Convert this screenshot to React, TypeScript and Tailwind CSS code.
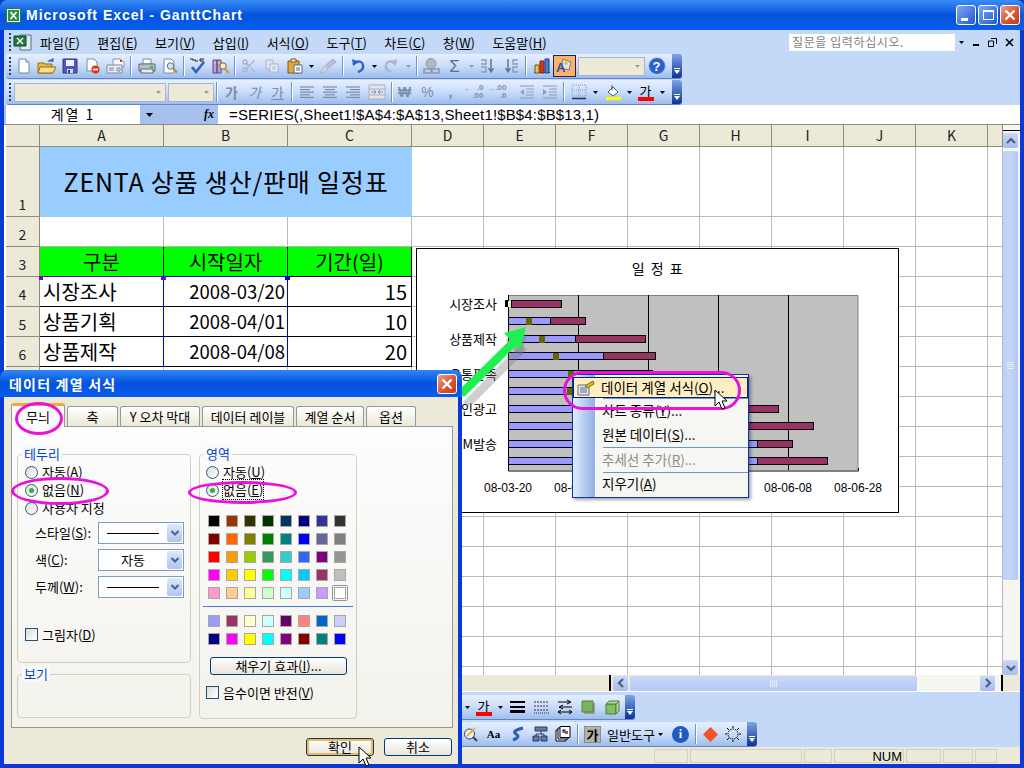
import type { ReactNode } from 'react'
import { Scissors } from 'lucide-react'

const font = "font-['Noto_Sans_CJK_KR','Liberation_Sans',sans-serif]"

function Ico({ children, w = 16, vb = '0 0 16 16' }: { children: ReactNode; w?: number; vb?: string }) {
  return (
    <svg width={w} height={16} viewBox={vb} className="block">
      {children}
    </svg>
  )
}

function Btn({ children, w = 'w-[23px]', on }: { children: ReactNode; w?: string; on?: boolean }) {
  return (
    <div className={`${w} h-[22px] flex items-center justify-center shrink-0 ${on ? 'bg-[#ffb266] border border-[#0a246a]' : ''}`}>
      {children}
    </div>
  )
}

function Sep({ w }: { w: string }) {
  return (
    <div className={`${w} h-[20px] flex justify-center shrink-0`}>
      <div className="w-px h-full bg-[#6f93cf] border-r border-white box-content" />
    </div>
  )
}

function Drop({ w = 'w-[10px]', gray }: { w?: string; gray?: boolean }) {
  return (
    <div className={`${w} h-[22px] flex items-center justify-center shrink-0`}>
      <svg width="5" height="3" viewBox="0 0 5 3">
        <path d="M0 0h5L2.5 3z" fill={gray ? '#8d9bb5' : '#000'} />
      </svg>
    </div>
  )
}

function Grip() {
  return (
    <div className="w-[2px] h-full ml-[3px] mr-[1px] flex flex-col justify-center gap-[2px] shrink-0">
      {[0, 1, 2, 3, 4].map((i) => (
        <div key={i} className="w-[2px] h-[2px] bg-[#27416f]" />
      ))}
    </div>
  )
}

function Chevron() {
  return (
    <div className="absolute right-0 top-0 bottom-0 w-[10px] rounded-r-[3px] bg-gradient-to-b from-[#7ea3e6] to-[#0f3295] flex flex-col items-center justify-end pb-[4px]">
      <div className="w-[6px] h-px bg-white mb-[1px]" />
      <svg width="6" height="4" viewBox="0 0 6 4">
        <path d="M0 0h6L3 4z" fill="#fff" />
      </svg>
    </div>
  )
}

function Combo({ w }: { w: string }) {
  return (
    <div className={`${w} h-[19px] bg-[#ece9d8] border border-[#a8b6ce] flex items-center justify-end pr-[4px] shrink-0`}>
      <svg width="5" height="3" viewBox="0 0 5 3">
        <path d="M0 0h5L2.5 3z" fill="#9a9a90" />
      </svg>
    </div>
  )
}

const NewIcon = () => (
  <Ico>
    <path d="M3 1h7l3 3v11H3z" fill="#fff" stroke="#7a8aa0" />
    <path d="M10 1v3h3" fill="#dfe7f4" stroke="#7a8aa0" />
  </Ico>
)
const OpenIcon = () => (
  <Ico w={20} vb="0 0 20 16">
    <path d="M1 5h6l1 1h7v9H1z" fill="#e8b64a" stroke="#9b6a14" />
    <path d="M3 9h16l-3 6H1z" fill="#f8dd84" stroke="#9b6a14" />
    <path d="M11 4q2-3 5-2M16 0v3h-3" fill="none" stroke="#3e6cc8" strokeWidth="1.3" />
  </Ico>
)
const SaveIcon = () => (
  <Ico>
    <path d="M1 1h14v14H1z" fill="#5158bb" stroke="#33387a" />
    <path d="M4 2h8v6H4z" fill="#eef1fb" />
    <path d="M5 11h6v4H5z" fill="#d7dbe8" />
    <path d="M6 12h2v3H6z" fill="#33387a" />
  </Ico>
)
const PermIcon = () => (
  <Ico>
    <path d="M2 1h7l3 3v9H2z" fill="#fff" stroke="#7a8aa0" />
    <circle cx="10.5" cy="11.5" r="4" fill="#d8391d" />
    <path d="M8 11.5h5" stroke="#fff" strokeWidth="1.6" />
  </Ico>
)
const MailIcon = () => (
  <Ico w={20} vb="0 0 20 16">
    <path d="M7 1h7l4 3v5H7z" fill="#f4f6fb" stroke="#8a94a6" />
    <path d="M1 7h15v8H1z" fill="#e9edf4" stroke="#7c879b" />
    <path d="M3 10h5M3 12h5M11 10h3v3h-3z" stroke="#7c879b" fill="none" />
    <path d="M14 2h2v2h-2z" fill="#d8391d" />
  </Ico>
)
const PrintIcon = () => (
  <Ico w={18} vb="0 0 18 16">
    <path d="M5 1h8v5H5z" fill="#fff" stroke="#7c879b" />
    <path d="M1 6h16v7H1z" fill="#b8c0cc" stroke="#5e6878" />
    <path d="M3 11h12v4H3z" fill="#e8ebf0" stroke="#5e6878" />
    <path d="M12 8h3v2h-3z" fill="#27c13a" />
  </Ico>
)
const PreviewIcon = () => (
  <Ico>
    <path d="M2 1h7l3 3v11H2z" fill="#fff" stroke="#7a8aa0" />
    <circle cx="8.5" cy="8" r="3.2" fill="#cfe3fa" stroke="#62718a" />
    <path d="M11 10.5l4 4" stroke="#c88a1e" strokeWidth="2" />
  </Ico>
)
const SpellIcon = () => (
  <Ico>
    <path d="M0 1h3v2M5 1v2h3M10 1h4M10 1v2h4" stroke="#222" fill="none" />
    <path d="M2 9l4 5L14 4" fill="none" stroke="#2f62c9" strokeWidth="2.6" />
  </Ico>
)
const ResearchIcon = () => (
  <Ico w={18} vb="0 0 18 16">
    <path d="M1 2h4v13H1zM5 2h4v13H5z" fill="#b9a2d6" stroke="#5f4b88" />
    <path d="M2 5h2M6 5h2" stroke="#f5d76e" />
    <circle cx="11" cy="8" r="3.2" fill="#f4eec0" stroke="#7a6a2e" />
    <path d="M13 11l4 4" stroke="#c8a01e" strokeWidth="2" />
  </Ico>
)
const CopyIcon = () => (
  <Ico>
    <path d="M2 2h7v9H2z" fill="#dde4ee" stroke="#aab6c9" />
    <path d="M6 6h8v8H6z" fill="#e9eef5" stroke="#aab6c9" />
    <path d="M8 9h4M8 11h4" stroke="#aab6c9" />
  </Ico>
)
const PasteIcon = () => (
  <Ico>
    <path d="M1 3h11v12H1z" fill="#e0a93a" stroke="#7a5b18" />
    <path d="M4 1h5v3H4z" fill="#f6eecb" stroke="#7a5b18" />
    <path d="M7 7h8v8H7z" fill="#fff" stroke="#5b6a85" />
    <path d="M9 10h4M9 12h4" stroke="#5b6a85" />
  </Ico>
)
const BrushIcon = () => (
  <Ico w={18} vb="0 0 18 16">
    <path d="M1 15l5-7 3 3-5 4z" fill="#d2d9e4" stroke="#a5b0c2" />
    <path d="M7 7l7-6 3 3-7 6z" fill="#b6c0cf" stroke="#a5b0c2" />
  </Ico>
)
const UndoIcon = ({ gray }: { gray?: boolean }) => (
  <Ico>
    <path d="M5 4q7-2 8 3t-5 7" fill="none" stroke={gray ? '#a9b7cf' : '#2f62c9'} strokeWidth="2.4" />
    <path d="M2 1l1 7 6-4z" fill={gray ? '#a9b7cf' : '#2f62c9'} />
  </Ico>
)
const LinkIcon = () => (
  <Ico w={18} vb="0 0 18 16">
    <circle cx="8" cy="5.5" r="5" fill="#aeb8c6" stroke="#8e99aa" />
    <path d="M1 11h7v4H1zM9 11h7v4H9z" fill="none" stroke="#8e99aa" strokeWidth="1.6" />
  </Ico>
)
const SortIcon = () => (
  <Ico>
    <path d="M1 2h5v4H1M1 9h5v5H1" fill="none" stroke="#8e9cb4" strokeWidth="1.4" />
    <path d="M11 1v12M8.5 10l2.5 4 2.5-4" fill="none" stroke="#5d6e8c" strokeWidth="1.4" />
  </Ico>
)
const ChartIcon = () => (
  <Ico w={18} vb="0 0 18 16">
    <path d="M1 14.5h16" stroke="#2b3a55" />
    <path d="M2 7h4v8H2z" fill="#f0c33c" stroke="#6d5a18" />
    <path d="M7 3h4v12H7z" fill="#d8391d" stroke="#7a2010" />
    <path d="M12 1h4v14h-4z" fill="#4a7fd8" stroke="#1f3f80" />
  </Ico>
)
const WizardIcon = () => (
  <Ico w={18} vb="0 0 18 16">
    <path d="M7 1l8 3-2 8-8-2z" fill="#dfe3ea" stroke="#6f7a8c" />
    <path d="M9 3l3 1-1 3-3-1z" fill="#e8c12b" />
    <text x="0" y="14" fontSize="13" fontWeight="700" fill="#2a4fa8" fontFamily="Liberation Sans">A</text>
  </Ico>
)
const HelpIcon = () => (
  <div className="w-[18px] h-[18px] rounded-full bg-[#2a62d0] border border-[#c2d4f0] flex items-center justify-center text-white text-[13px] font-bold leading-none font-['Liberation_Sans',sans-serif]">
    ?
  </div>
)
const Lines = ({ kind }: { kind: 'l' | 'c' | 'r' }) => {
  const rows = [0, 1, 2, 3, 4]
  return (
    <Ico>
      {rows.map((i) => {
        const len = i % 2 ? 10 : 14
        const x = kind === 'l' ? 1 : kind === 'c' ? (16 - len) / 2 : 15 - len
        return <path key={i} d={`M${x} ${3 + i * 2.6}h${len}`} stroke="#7d8da8" strokeWidth="1.2" />
      })}
    </Ico>
  )
}
const MergeIcon = () => (
  <Ico w={18} vb="0 0 18 16">
    <path d="M1 1h16v14H1z" fill="#e2e6ec" stroke="#a6b2c6" />
    <path d="M1 5h16M1 11h16" stroke="#a6b2c6" />
    <path d="M3 8h5M8 8l-2-2M8 8l-2 2M15 8h-5M10 8l2-2M10 8l2 2" stroke="#7d8da8" fill="none" />
  </Ico>
)
const DecIcon = ({ flip }: { flip?: boolean }) => (
  <div className="relative w-[20px] h-[16px] text-[8px] leading-[8px] text-[#7d8da8] font-['Liberation_Sans',sans-serif] font-bold text-right">
    <div>{flip ? '.00' : '.0'}</div>
    <div>{flip ? '.0' : '.00'}</div>
    <div className="absolute left-0 top-[1px]">{flip ? '→' : '←'}</div>
  </div>
)
const IndentIcon = ({ flip }: { flip?: boolean }) => (
  <Ico>
    <path d="M1 2h14M7 5h8M7 8h8M7 11h8M1 14h14" stroke="#8e9cb4" />
    <path d={flip ? 'M1 5l4 3-4 3z' : 'M5 5L1 8l4 3z'} fill="#8e9cb4" />
  </Ico>
)
const BorderIcon = () => (
  <Ico>
    <path d="M1 1h14v11H1z" fill="none" stroke="#8e9cb4" strokeDasharray="1 1" />
    <path d="M8 1v11M1 6h14" stroke="#8e9cb4" strokeDasharray="1 1" />
    <path d="M1 14.5h14" stroke="#26365a" strokeWidth="1.6" />
  </Ico>
)
const FillIcon = () => (
  <Ico>
    <path d="M3 8l5-5 5 5-5 4z" fill="#fff" stroke="#4d5a73" />
    <path d="M7 1v5" stroke="#4d5a73" />
    <path d="M1 13h15v3H1z" fill="#ffff00" />
  </Ico>
)
const FontColor = () => (
  <div className="w-[16px] flex flex-col items-center">
    <span className="text-[13px] leading-[14px]">가</span>
    <div className="w-[16px] h-[4px] bg-[#ff0000] -mt-[1px]" />
  </div>
)

function MenuBar() {
  const items: [string, string][] = [
    ['파일', 'F'],
    ['편집', 'E'],
    ['보기', 'V'],
    ['삽입', 'I'],
    ['서식', 'O'],
    ['도구', 'T'],
    ['차트', 'C'],
    ['창', 'W'],
    ['도움말', 'H'],
  ]
  return (
    <div className="h-[24px] flex items-center relative pl-[2px]">
      <Grip />
      <div className="w-[21px] h-[17px] shrink-0">
        <svg width="21" height="17" viewBox="0 0 21 17">
          <path d="M8 1h11v15H8z" fill="#dfe7f4" stroke="#5e6f8c" />
          <path d="M2 2h12v10H2z" fill="#1f7a3f" stroke="#0d4a23" />
          <path d="M5 4l6 6M11 4l-6 6" stroke="#fff" strokeWidth="1.4" />
        </svg>
      </div>
      <div className="flex ml-[7px]">
        {items.map(([k, l]) => (
          <div key={l} className="text-[13px] leading-none text-black pr-[17.4px] whitespace-nowrap">
            {k}(<u>{l}</u>)
          </div>
        ))}
      </div>
      <div className="ml-auto flex items-center mr-[1px]">
        <div className="w-[178px] h-[17px] bg-white flex items-center justify-between">
          <span className="text-[12px] leading-none text-[#7f7f7f] pl-[3px] tracking-[0.6px]">질문을 입력하십시오.</span>
          <div className="w-[12px] h-full bg-[#c3d9f7] flex items-center justify-center">
            <svg width="5" height="3" viewBox="0 0 5 3">
              <path d="M0 0h5L2.5 3z" fill="#000" />
            </svg>
          </div>
        </div>
        <div className="w-[52px] flex items-center justify-between pl-[6px] pr-[5px]">
          <div className="w-[6px] h-[2px] bg-black mt-[5px]" />
          <svg width="9" height="9" viewBox="0 0 9 9">
            <path d="M3 .5h5.5V6M.5 3h5v5.5h-5z" fill="none" stroke="#000" />
          </svg>
          <svg width="9" height="9" viewBox="0 0 9 9">
            <path d="M1 1l7 7M8 1L1 8" stroke="#000" strokeWidth="1.6" />
          </svg>
        </div>
      </div>
    </div>
  )
}

const barBg = 'bg-gradient-to-b from-[#e6f0ff] via-[#c9dcfa] to-[#9ebdec]'

function StandardBar() {
  return (
    <div className={`relative w-[676px] h-[25px] ${barBg} rounded-[3px] flex items-center border-b border-[#5f86c8]`}>
      <Grip />
      <div className="flex items-center">
        <Btn><NewIcon /></Btn>
        <Btn><OpenIcon /></Btn>
        <Btn><SaveIcon /></Btn>
        <Btn><PermIcon /></Btn>
        <Btn><MailIcon /></Btn>
        <Sep w="w-[8px]" />
        <Btn><PrintIcon /></Btn>
        <Btn><PreviewIcon /></Btn>
        <Sep w="w-[5px]" />
        <Btn><SpellIcon /></Btn>
        <Btn><ResearchIcon /></Btn>
        <Sep w="w-[5px]" />
        <Btn><Scissors size={16} color="#a9b3c4" strokeWidth={2} /></Btn>
        <Btn><CopyIcon /></Btn>
        <Btn><PasteIcon /></Btn>
        <Drop />
        <Btn><BrushIcon /></Btn>
        <Sep w="w-[7px]" />
        <Btn><UndoIcon /></Btn>
        <Drop />
        <Btn><div className="-scale-x-100"><UndoIcon gray /></div></Btn>
        <Drop w="w-[12px]" gray />
        <Sep w="w-[6px]" />
        <Btn><LinkIcon /></Btn>
        <Btn><span className="text-[17px] leading-none text-[#5d6e8c] font-['Liberation_Sans',sans-serif]">Σ</span></Btn>
        <Drop gray />
        <Btn><SortIcon /></Btn>
        <Btn><div className="-scale-x-100"><SortIcon /></div></Btn>
        <Sep w="w-[8px]" />
        <Btn><ChartIcon /></Btn>
        <Btn on><WizardIcon /></Btn>
        <div className="w-[2px]" />
        <Combo w="w-[67px]" />
        <Btn w="w-[23px]"><HelpIcon /></Btn>
      </div>
      <Chevron />
    </div>
  )
}

function FormatBar() {
  const gray = 'text-[14px] leading-none text-[#7d8da8]'
  return (
    <div className={`relative w-[676px] h-[25px] ${barBg} rounded-[3px] flex items-center border-b border-[#5f86c8]`}>
      <Grip />
      <div className="flex items-center">
        <div className="w-[2px]" />
        <Combo w="w-[152px]" />
        <div className="w-[2px]" />
        <Combo w="w-[46px]" />
        <Sep w="w-[6px]" />
        <Btn><span className={`${gray} font-bold`}>가</span></Btn>
        <Btn><span className={`${gray} italic`}>가</span></Btn>
        <Btn><span className={`${gray} underline`}>가</span></Btn>
        <Sep w="w-[6px]" />
        <Btn><Lines kind="l" /></Btn>
        <Btn><Lines kind="c" /></Btn>
        <Btn><Lines kind="r" /></Btn>
        <Btn w="w-[26px]"><MergeIcon /></Btn>
        <Sep w="w-[3px]" />
        <Btn><span className={`${gray} font-bold font-['Liberation_Sans',sans-serif]`}>₩</span></Btn>
        <Btn><span className={`${gray} font-['Liberation_Sans',sans-serif]`}>%</span></Btn>
        <Btn><span className={`${gray} font-bold font-['Liberation_Sans',sans-serif]`}>,</span></Btn>
        <Btn><DecIcon /></Btn>
        <Btn><DecIcon flip /></Btn>
        <div className="w-[7px]" />
        <Btn><IndentIcon /></Btn>
        <Btn><IndentIcon flip /></Btn>
        <Sep w="w-[6px]" />
        <Btn><BorderIcon /></Btn>
        <Drop />
        <div className="w-px" />
        <Btn><FillIcon /></Btn>
        <Drop />
        <Btn><FontColor /></Btn>
        <Drop />
      </div>
      <Chevron />
    </div>
  )
}

function FormulaBar() {
  return (
    <div className="h-[19px] flex items-stretch bg-[#a7c0ee]">
      <div className="ml-[2px] w-[134px] bg-white text-center text-[14px] leading-[19px] tracking-[2px]">계열 1</div>
      <div className="w-[78px] flex items-center relative">
        <svg width="7" height="4" viewBox="0 0 7 4" className="ml-[6px]">
          <path d="M0 0h7L3.5 4z" fill="#000" />
        </svg>
        <span className="absolute left-[64px] top-0 text-[12px] leading-[19px] italic font-bold font-['Liberation_Serif',serif]">fx</span>
      </div>
      <div className="flex-1 bg-white pl-[11px] text-[15px] leading-[19px] whitespace-nowrap font-['Liberation_Sans',sans-serif] tracking-[0.15px]">
        =SERIES(,Sheet1!$A$4:$A$13,Sheet1!$B$4:$B$13,1)
      </div>
    </div>
  )
}

const colNames = ['A', 'B', 'C', 'D', 'E', 'F', 'G', 'H', 'I', 'J', 'K', '']
const rowNums = [1, 2, 3, 4, 5, 6, 7, 8, 9, 10, 11, 12, 13, 14, 15, 16, 17, 18]
const rows: Record<number, [string, string, string]> = {
  4: ['시장조사', '2008-03/20', '15'],
  5: ['상품기획', '2008-04/01', '10'],
  6: ['상품제작', '2008-04/08', '20'],
}

const headCell = 'bg-[#ece9d8] border-r border-b border-[#8e8b78] flex items-center justify-center text-[14px] text-[#222]'
const gridCell = 'border-r border-b border-[#b9b9b9]'

function Sheet() {
  return (
    <div className="h-[551px] flex border-t border-[#8e8b78] relative">
      <div className="w-[999px] overflow-hidden bg-white">
        <div className="pl-[2px] grid grid-cols-[34px_124px_124px_124px_repeat(8,72px)_15px] grid-rows-[22px_70px_repeat(16,30px)]">
          <div className={headCell} />
          {colNames.map((c) => (
            <div key={c || 'x'} className={headCell}>{c}</div>
          ))}
          {rowNums.map((r) => (
            <SheetRow key={r} r={r} />
          ))}
        </div>
      </div>
      <VScroll />
    </div>
  )
}

function SheetRow({ r }: { r: number }) {
  // rows from 7 down sit behind the dialog, their numbers never show
  const rowHead = (
    <div className="bg-[#ece9d8] border-r border-b border-[#8e8b78] flex items-end justify-center text-[14px] leading-[20px] text-[#222] pb-[2px]">{r <= 6 ? r : ''}</div>
  )
  const rest = colNames.slice(3).map((c) => <div key={c || 'x'} className={gridCell} />)
  if (r === 1) {
    return (
      <>
        {rowHead}
        <div className="col-span-3 bg-[#99ccff] border-b border-[#99ccff] flex items-center justify-center text-[25px] leading-none pb-[1px] tracking-[0.8px]">
          ZENTA 상품 생산/판매 일정표
        </div>
        {rest}
      </>
    )
  }
  if (r === 3) {
    return (
      <>
        {rowHead}
        {['구분', '시작일자', '기간(일)'].map((t) => (
          <div key={t} className="bg-[#00ff00] border-r border-b border-black flex items-center justify-center text-[20px] leading-none">{t}</div>
        ))}
        {rest}
      </>
    )
  }
  const d = rows[r]
  if (d) {
    return (
      <>
        {rowHead}
        <div className="border-r border-b border-black border-r-[#0000ff] flex items-center pl-[3px] text-[20px] leading-none">{d[0]}</div>
        <div className="border-r border-b border-black border-r-[#0000ff] flex items-center justify-end pr-[2px] text-[18.5px] leading-none">{d[1]}</div>
        <div className="border-r border-b border-black flex items-center justify-end pr-[4px] text-[20px] leading-none">{d[2]}</div>
        {rest}
      </>
    )
  }
  return (
    <>
      {rowHead}
      <div className={gridCell} />
      <div className={gridCell} />
      <div className={gridCell} />
      {rest}
    </>
  )
}

function ScrollArrow({ dir }: { dir: 'u' | 'd' | 'l' | 'r' }) {
  const d = { u: 'M2 8l4-4 4 4', d: 'M2 4l4 4 4-4', l: 'M8 2L4 6l4 4', r: 'M4 2l4 4-4 4' }[dir]
  return (
    <div className="w-[15px] h-[15px] rounded-[2px] bg-gradient-to-b from-[#c9d8f8] to-[#a8bdf0] flex items-center justify-center shrink-0">
      <svg width="12" height="12" viewBox="0 0 12 12">
        <path d={d} fill="none" stroke="#4d6185" strokeWidth="2.2" />
      </svg>
    </div>
  )
}

function VScroll() {
  return (
    <div className="w-[17px] bg-[#f6f5f0] flex flex-col">
      <div className="h-[6px] border-b border-black mx-[0px]" />
      <div className="h-[2px]" />
      <ScrollArrow dir="u" />
      <div className="h-[2px]" />
      <div className="h-[431px] w-[15px] rounded-[2px] bg-gradient-to-r from-[#bed0f9] via-[#c4d5fb] to-[#b2c7f6] border-y border-white flex items-center justify-center">
        <div className="w-[7px] h-[7px] flex flex-col justify-between">
          <div className="h-px bg-[#e8eefc]" />
          <div className="h-px bg-[#e8eefc]" />
          <div className="h-px bg-[#e8eefc]" />
          <div className="h-px bg-[#e8eefc]" />
        </div>
      </div>
      <div className="flex-1" />
      <ScrollArrow dir="d" />
    </div>
  )
}

function HScroll() {
  return (
    <div className="h-[17px] bg-[#ece9d8] flex items-center border-b border-white">
      <div className="w-[605px] h-full" />
      <div className="w-[2px] h-full bg-black" />
      <div className="w-[2px]" />
      <ScrollArrow dir="l" />
      <div className="w-[2px]" />
      <div className="w-[287px] h-[15px] rounded-[2px] bg-gradient-to-b from-[#c9d8fa] to-[#b4c8f6] flex items-center justify-center">
        <div className="w-[7px] h-[7px] flex justify-between">
          <div className="w-px bg-[#e8eefc]" />
          <div className="w-px bg-[#e8eefc]" />
          <div className="w-px bg-[#e8eefc]" />
          <div className="w-px bg-[#e8eefc]" />
        </div>
      </div>
      <div className="w-[63px] h-full bg-[#f6f5f0]" />
      <ScrollArrow dir="r" />
      <div className="w-[6px] h-full bg-[#f6f5f0]" />
      <div className="w-[2px] h-full bg-black" />
    </div>
  )
}

function DrawBars() {
  return (
    <div className="h-[55px] pt-[3px] flex flex-col gap-[2px]">
      <div className={`relative w-[631px] h-[25px] ${barBg} rounded-[3px] flex items-center border-b border-[#5f86c8]`}>
        <div className="w-[458px]" />
        <Drop />
        <Btn><FontColor /></Btn>
        <Drop w="w-[11px]" />
        <Btn w="w-[22px]">
          <Ico>
            <path d="M1 3h15M1 8h15" stroke="#000" strokeWidth="2" />
            <path d="M1 12.5h15" stroke="#000" strokeWidth="3" />
          </Ico>
        </Btn>
        <Btn w="w-[25px]">
          <Ico>
            <path d="M1 3h15M1 7h15M1 11h15" stroke="#333" strokeDasharray="2 1" />
            <path d="M1 14h15" stroke="#333" strokeDasharray="1 1" />
          </Ico>
        </Btn>
        <Btn>
          <Ico>
            <path d="M1 3h12M10 1l4 2-4 2M15 8H3M6 6L2 8l4 2M1 13h14M4 11l-3 2 3 2M12 11l3 2-3 2" stroke="#000" fill="none" />
          </Ico>
        </Btn>
        <Btn>
          <Ico>
            <path d="M4 4h11v11H4z" fill="#9a9a9a" />
            <path d="M2 2h11v11H2z" fill="#7db35f" stroke="#4d8236" />
          </Ico>
        </Btn>
        <Btn w="w-[25px]">
          <Ico>
            <path d="M2 5h10v10H2z" fill="#85bd66" stroke="#4d7f38" />
            <path d="M2 5l3-3h10l-3 3zM12 5l3-3v10l-3 3z" fill="#b5d8a0" stroke="#4d7f38" />
          </Ico>
        </Btn>
        <Chevron />
      </div>
      <div className={`relative w-[753px] h-[25px] ${barBg} rounded-[3px] flex items-center border-b border-[#5f86c8]`}>
        <div className="w-[455px]" />
        <Btn>
          <Ico>
            <circle cx="6.5" cy="8" r="5" fill="#e6f1fb" stroke="#33435f" />
            <path d="M10 11l4 4" stroke="#33435f" strokeWidth="2" />
            <path d="M4 10l8-8" stroke="#e8b229" strokeWidth="2" />
          </Ico>
        </Btn>
        <Btn><span className="text-[11px] font-bold leading-none font-['Liberation_Serif',serif]">Aa</span></Btn>
        <Btn>
          <Ico>
            <path d="M4 14q8-3 3-6t7-6" fill="none" stroke="#2d5cb4" strokeWidth="3" />
          </Ico>
        </Btn>
        <Btn>
          <Ico>
            <path d="M3 1h12v4H3zM1 10h6v5H1zM9 10h6v5H9z" fill="#5f79ac" stroke="#2b3a55" />
            <path d="M9 5v3M4 10V8h8v2" stroke="#2b3a55" fill="none" />
          </Ico>
        </Btn>
        <Btn>
          <Ico>
            <path d="M1 4h10v11H1z" fill="#fff" stroke="#000" />
            <path d="M3 2h10v11H3z" fill="#fff" stroke="#000" />
            <path d="M5 0.5h10v11H5z" fill="#fff" stroke="#000" />
            <circle cx="9" cy="5" r="2" fill="#2d5cb4" />
            <path d="M10 5h3v3h-3z" fill="#e2431e" />
          </Ico>
        </Btn>
        <Sep w="w-[7px]" />
        <Btn>
          <div className="w-[17px] h-[17px] bg-[#b3b1a8] border border-[#8f8d85] flex items-center justify-center text-[13px] font-bold leading-none">가</div>
        </Btn>
        <span className="ml-[3px] text-[13px] leading-none whitespace-nowrap">일반도구</span>
        <Drop w="w-[11px]" />
        <div className="w-[6px]" />
        <div className="w-[17px] h-[17px] rounded-full bg-[#1e5cc4] flex items-center justify-center text-white text-[12px] font-bold leading-none font-['Liberation_Serif',serif]">i</div>
        <Sep w="w-[14px]" />
        <Btn w="w-[15px]">
          <svg width="15" height="15" viewBox="0 0 15 15">
            <path d="M7.5 0L15 7.5 7.5 15 0 7.5z" fill="#f1552a" />
          </svg>
        </Btn>
        <Btn w="w-[30px]">
          <Ico>
            <circle cx="8" cy="8" r="5" fill="none" stroke="#000" strokeDasharray="1.5 1" />
            <path d="M8 0v2M8 14v2M0 8h2M14 8h2M2 2l2 2M12 12l2 2M14 2l-2 2M2 14l2-2" stroke="#000" />
          </Ico>
        </Btn>
        <Chevron />
      </div>
    </div>
  )
}

function StatusBar() {
  const panel = 'h-[14px] border border-[#d5d1bf]'
  return (
    <div className="h-[17px] bg-[#ece9d8] flex items-center pl-[650px] gap-[2px] relative">
      <div className={`${panel} w-[34px]`} />
      <div className={`${panel} w-[112px]`} />
      <div className={`${panel} w-[28px]`} />
      <div className={`${panel} w-[70px] text-[13px] leading-[13px] text-right pr-[1px] font-['Liberation_Sans',sans-serif]`}>NUM</div>
      <div className={`${panel} w-[35px]`} />
      <div className={`${panel} w-[30px]`} />
      <div className={`${panel} w-[22px]`} />
    </div>
  )
}

/* chart sits on the sheet as a free object, coordinates are page pixels */
type Bar = { y: number; b: number; c?: [number, number]; o?: number }
const bars: Bar[] = [
  { y: 304, b: 511, c: [511, 561] },
  { y: 321, b: 550, c: [550, 585], o: 526 },
  { y: 339, b: 575, c: [575, 645], o: 539 },
  { y: 356, b: 603, c: [603, 655], o: 553 },
  { y: 374, b: 634, c: [634, 652], o: 568 },
  { y: 391, b: 640, o: 567 },
  { y: 409, b: 700, c: [700, 778] },
  { y: 426, b: 730, c: [730, 813] },
  { y: 444, b: 757, c: [757, 792] },
  { y: 461, b: 757, c: [757, 827] },
]

// the two labels between these lie fully behind the context menu
const axisLabels: [string, number][] = [
  ['08-03-20', 508],
  ['08-04-09', 578],
  ['08-06-08', 788],
  ['08-06-28', 858],
]

function Chart() {
  const tf = "font-['Noto_Sans_CJK_KR',sans-serif]"
  return (
    <svg viewBox="416 248 483 265" className="absolute left-[416px] top-[248px] w-[483px] h-[265px]">
      <rect x="416.5" y="248.5" width="482" height="264" fill="#fff" stroke="#000" />
      <text x="658" y="274" textAnchor="middle" fontSize="14" letterSpacing="1.5" className={tf}>일 정 표</text>
      {['시장조사', '상품제작', '유통판촉', '인광고', 'DM발송'].map((t, i) => (
        <text key={t} x="497" y={309 + i * 35} textAnchor="end" fontSize="13" className={tf}>{t}</text>
      ))}
      <rect x="508" y="295" width="350" height="175" fill="#c0c0c0" />
      <path d="M508 295.5h350v175" fill="none" stroke="#808080" />
      {[578, 648, 718, 788].map((x) => (
        <path key={x} d={`M${x + 0.5} 295v175`} stroke="#000" />
      ))}
      <path d="M508.5 295v176h350v-3" fill="none" stroke="#000" />
      {bars.map((b) => (
        <g key={b.y}>
          {b.y !== 304 && <rect x="508.5" y={b.y - 3.5} width={b.b - 508} height="7" fill="#9999ff" stroke="#000" />}
          {b.c && <rect x={b.c[0] + 0.5} y={b.y - 3.5} width={b.c[1] - b.c[0]} height="7" fill="#993366" stroke="#000" />}
          {b.o && <rect x={b.o} y={b.y - 3} width="6" height="7" fill="#666600" />}
        </g>
      ))}
      <rect x="505" y="300" width="3" height="7" fill="#000" />
      <rect x="508" y="301" width="3" height="6" fill="#ccffcc" />
      {axisLabels.map(([t, x]) => (
        <text key={t} x={x} y="492" textAnchor="middle" fontSize="12" className="font-['Liberation_Sans',sans-serif]">{t}</text>
      ))}
    </svg>
  )
}

function GreenArrow() {
  return (
    <svg viewBox="455 320 85 85" className="absolute left-[455px] top-[320px] w-[85px] h-[85px]">
      <path d="M463 402l58-58 6 6-58 58z" fill="#777" opacity="0.35" />
      <path d="M527 334l-22 6 16 17z" fill="#777" opacity="0.35" />
      <path d="M458 391l55-54 6 6-55 54z" fill="#1ff052" />
      <path d="M526 327l-22 6 16 17z" fill="#1ff052" />
    </svg>
  )
}

function ContextMenu() {
  return (
    <div className="absolute left-[572px] top-[374px] w-[177px] h-[124px] border border-[#0a32b4] bg-[#f6f6f3] shadow-[2px_2px_3px_rgba(0,0,0,0.35)] flex text-[13.5px]">
      <div className="w-[22px] bg-gradient-to-r from-[#e3eefc] to-[#8fb0e6]" />
      <div className="flex-1 flex flex-col">
        <div className="-ml-[22px] mt-[2px] h-[21px] bg-[#ffeec2] border border-[#0a246a] flex items-center relative">
          <svg width="18" height="16" viewBox="0 0 18 16" className="ml-[3px]">
            <path d="M1 5h11v10H1z" fill="#dfe7f4" stroke="#5e6f8c" />
            <path d="M3 8h7M3 10h7M3 12h7" stroke="#5e6f8c" />
            <path d="M8 6l8-5 1 3-7 4z" fill="#e8b229" stroke="#8a6a10" />
          </svg>
          <span className="ml-[6px] whitespace-nowrap">데이터 계열 서식(<u>O</u>)...</span>
        </div>
        <div className="ml-[8px] h-px bg-[#6f93cf]" />
        <div className="h-[24px] pl-[7px]"><span className="leading-[22px] whitespace-nowrap">차트 종류(<u>Y</u>)...</span></div>
        <div className="h-[24px] pl-[7px]"><span className="leading-[22px] whitespace-nowrap">원본 데이터(<u>S</u>)...</span></div>
        <div className="ml-[8px] h-px bg-[#6f93cf]" />
        <div className="h-[24px] pl-[7px] text-[#8d8d8d]"><span className="leading-[22px] whitespace-nowrap">추세선 추가(<u>R</u>)...</span></div>
        <div className="ml-[8px] h-px bg-[#6f93cf]" />
        <div className="h-[23px] pl-[7px]"><span className="leading-[21px] whitespace-nowrap">지우기(<u>A</u>)</span></div>
      </div>
    </div>
  )
}

function Radio({ checked, children }: { checked?: boolean; children: ReactNode }) {
  return (
    <div className="h-[18px] flex items-center gap-[4px] text-[13px] whitespace-nowrap">
      <div className="w-[13px] h-[13px] rounded-full border border-[#2f5a86] bg-gradient-to-br from-[#dcdcd5] to-white flex items-center justify-center shrink-0">
        {checked && <div className="w-[5px] h-[5px] rounded-full bg-[#2fb52f]" />}
      </div>
      <span>{children}</span>
    </div>
  )
}

function Check({ children }: { children: ReactNode }) {
  return (
    <div className="flex items-center gap-[4px] text-[13px] whitespace-nowrap">
      <div className="w-[13px] h-[13px] border border-[#1c5180] bg-gradient-to-br from-[#dcdcd5] to-white shrink-0" />
      <span>{children}</span>
    </div>
  )
}

function LineSelect({ label, children }: { label: ReactNode; children: ReactNode }) {
  return (
    <div className="flex items-center h-[22px] pl-[17px]">
      <div className="w-[63px] text-[13px] whitespace-nowrap">{label}</div>
      <div className="w-[86px] h-[22px] bg-white border border-[#7f9db9] flex items-center">
        <div className="flex-1 flex items-center justify-center text-[13px]">{children}</div>
        <div className="w-[15px] h-[18px] mr-[1px] rounded-[2px] bg-gradient-to-b from-[#dfe8fb] to-[#b0c4f3] flex items-center justify-center">
          <svg width="10" height="10" viewBox="0 0 10 10">
            <path d="M1.5 3L5 6.5 8.5 3" fill="none" stroke="#4d6185" strokeWidth="2" />
          </svg>
        </div>
      </div>
    </div>
  )
}

function Group({ title, className, children }: { title: string; className: string; children?: ReactNode }) {
  return (
    <div className={`relative border border-[#d0d0bf] rounded-[4px] ${className}`}>
      <span className="absolute -top-[9px] left-[4px] px-[2px] bg-[#faf9f7] text-[13px] leading-[16px] text-[#0046d5]">{title}</span>
      {children}
    </div>
  )
}

const swatchTop = [
  'bg-[#000000]', 'bg-[#993300]', 'bg-[#333300]', 'bg-[#003300]', 'bg-[#003366]', 'bg-[#000080]', 'bg-[#333399]', 'bg-[#333333]',
  'bg-[#800000]', 'bg-[#ff6600]', 'bg-[#808000]', 'bg-[#008000]', 'bg-[#008080]', 'bg-[#0000ff]', 'bg-[#666699]', 'bg-[#808080]',
  'bg-[#ff0000]', 'bg-[#ff9900]', 'bg-[#99cc00]', 'bg-[#339966]', 'bg-[#33cccc]', 'bg-[#3366ff]', 'bg-[#800080]', 'bg-[#969696]',
  'bg-[#ff00ff]', 'bg-[#ffcc00]', 'bg-[#ffff00]', 'bg-[#00ff00]', 'bg-[#00ffff]', 'bg-[#00ccff]', 'bg-[#993366]', 'bg-[#c0c0c0]',
  'bg-[#ff99cc]', 'bg-[#ffcc99]', 'bg-[#ffff99]', 'bg-[#ccffcc]', 'bg-[#ccffff]', 'bg-[#99ccff]', 'bg-[#cc99ff]', 'bg-[#ffffff]',
]
const swatchBottom = [
  'bg-[#9999ff]', 'bg-[#993366]', 'bg-[#ffffcc]', 'bg-[#ccffff]', 'bg-[#660066]', 'bg-[#ff8080]', 'bg-[#0066cc]', 'bg-[#ccccff]',
  'bg-[#000080]', 'bg-[#ff00ff]', 'bg-[#ffff00]', 'bg-[#00ffff]', 'bg-[#800080]', 'bg-[#800000]', 'bg-[#008080]', 'bg-[#0000ff]',
]

function Swatches({ list }: { list: string[] }) {
  return (
    <div className="grid grid-cols-[repeat(8,12px)] gap-[6px]">
      {list.map((c, i) => (
        <div key={i} className={`w-[12px] h-[12px] border border-[#a9a89f] ${c} relative`}>
          {c === 'bg-[#ffffff]' && <div className="absolute -inset-[3px] border border-[#8a97a8] rounded-[2px]" />}
        </div>
      ))}
    </div>
  )
}

function XpButton({ className, ok, children }: { className: string; ok?: boolean; children: ReactNode }) {
  return (
    <div className={`h-[18px] rounded-[3px] border border-[#003c74] bg-gradient-to-b from-white to-[#e7e5dc] text-center text-[13px] leading-[16px] ${ok ? 'shadow-[inset_0_0_0_2px_#f7b84b]' : ''} ${className}`}>
      {children}
    </div>
  )
}

function CloseBtn({ className }: { className: string }) {
  return (
    <div className={`rounded-[3px] border border-white bg-gradient-to-br from-[#e8a08a] via-[#dc5a35] to-[#c23a14] flex items-center justify-center ${className}`}>
      <svg width="12" height="12" viewBox="0 0 12 12">
        <path d="M1.5 1.5l9 9M10.5 1.5l-9 9" stroke="#fff" strokeWidth="2.4" />
      </svg>
    </div>
  )
}

function Dialog() {
  const tabs: [string, string][] = [
    ['축', 'w-[51px]'],
    ['Y 오차 막대', 'w-[80px]'],
    ['데이터 레이블', 'w-[92px]'],
    ['계열 순서', 'w-[68px]'],
    ['옵션', 'w-[50px]'],
  ]
  return (
    <div className="absolute left-0 top-[370px] w-[462px] h-[398px] rounded-t-[8px] overflow-hidden bg-[#0a3ad6] flex flex-col">
      <div className="h-[27px] shrink-0 bg-gradient-to-b from-[#2f86f5] via-[#0452dc] to-[#0a5cf0] flex items-center justify-between pl-[9px] pr-[5px]">
        <span className="text-[14px] leading-none font-bold text-white tracking-[1.2px]">데이터 계열 서식</span>
        <CloseBtn className="w-[20px] h-[20px]" />
      </div>
      <div className="mx-[4px] flex-1 mb-[4px] bg-[#ece9d8] flex flex-col px-[7px]">
        <div className="h-[29px] flex items-end gap-[2px] relative">
          <div className="w-[54px] h-[24px] bg-[#fcfcfc] border-x border-[#919b9c] rounded-t-[3px] border-t-[3px] border-t-[#f7a83c] flex items-center justify-center text-[13px] -mb-px relative">무늬</div>
          {tabs.map(([t, w]) => (
            <div key={t} className={`${w} h-[20px] bg-gradient-to-b from-white to-[#ece9d8] border border-b-0 border-[#919b9c] rounded-t-[3px] flex items-center justify-center text-[13px] whitespace-nowrap`}>{t}</div>
          ))}
        </div>
        <div className="w-[442px] h-[302px] border border-[#919b9c] bg-gradient-to-b from-[#fdfdfe] to-[#f3f2ec] pt-[27px] pl-[5px] flex gap-[8px]">
          <div className="w-[174px] flex flex-col gap-[11px]">
            <Group title="테두리" className="h-[209px]">
              <div className="pt-[8px] pl-[7px]">
                <Radio>자동(<u>A</u>)</Radio>
                <Radio checked>없음(<u>N</u>)</Radio>
                <Radio>사용자 지정</Radio>
              </div>
              <div className="mt-[5px] flex flex-col gap-[5px]">
                <LineSelect label={<>스타일(<u>S</u>):</>}><div className="w-[52px] h-px bg-black" /></LineSelect>
                <LineSelect label={<>색(<u>C</u>):</>}>자동</LineSelect>
                <LineSelect label={<>두께(<u>W</u>):</>}><div className="w-[52px] h-px bg-black" /></LineSelect>
              </div>
              <div className="mt-[27px] pl-[7px]">
                <Check>그림자(<u>D</u>)</Check>
              </div>
            </Group>
            <Group title="보기" className="h-[44px]" />
          </div>
          <Group title="영역" className="w-[158px] h-[265px]">
            <div className="pt-[8px] pl-[6px]">
              <Radio>자동(<u>U</u>)</Radio>
              <Radio checked><span className="outline outline-1 outline-dotted outline-black">없음(<u>E</u>)</span></Radio>
            </div>
            <div className="pl-[8px] mt-[16px]">
              <Swatches list={swatchTop} />
            </div>
            <div className="mx-[3px] mt-[7px] h-px bg-[#4a7bd0]" />
            <div className="pl-[8px] mt-[8px]">
              <Swatches list={swatchBottom} />
            </div>
            <div className="pl-[10px] mt-[12px]">
              <XpButton className="w-[137px]">채우기 효과(<u>I</u>)...</XpButton>
            </div>
            <div className="pl-[6px] mt-[8px]">
              <Check>음수이면 반전(<u>V</u>)</Check>
            </div>
          </Group>
        </div>
        <div className="flex justify-end gap-[10px] mt-[10px] -mr-[1px]">
          <XpButton ok className="w-[68px]">확인</XpButton>
          <XpButton className="w-[68px]">취소</XpButton>
        </div>
      </div>
    </div>
  )
}

function Cursor({ className }: { className: string }) {
  return (
    <svg width="14" height="22" viewBox="0 0 14 22" className={`absolute ${className}`}>
      <path d="M1 1v16l4-4 3 7 3-1-3-7h5z" fill="#fff" stroke="#000" />
    </svg>
  )
}

function SelectionMarks() {
  return (
    <>
      <div className="absolute left-[40px] top-[276px] w-[124px] h-px bg-[#8000c0]" />
      <div className="absolute left-[164px] top-[276px] w-[124px] h-px bg-[#0000ff]" />
      <div className="absolute left-[39px] top-[276px] w-[4px] h-[4px] bg-[#8000c0]" />
      <div className="absolute left-[161px] top-[276px] w-[5px] h-[4px] bg-[#5010e0]" />
      <div className="absolute left-[285px] top-[276px] w-[5px] h-[4px] bg-[#0000ff]" />
    </>
  )
}

export default function App() {
  return (
    <div className={`relative w-[1024px] h-[768px] overflow-hidden bg-[#0a3ad6] flex flex-col text-black ${font}`}>
      <div className="h-[30px] shrink-0 rounded-t-[7px] bg-gradient-to-b from-[#3a8cf6] via-[#0353dc] to-[#0b5ef0] flex items-center pl-[6px] pr-[4px]">
        <div className="w-[15px] h-[15px] bg-[#e8f3e6] border border-[#2f7a3f] flex items-center justify-center mr-[5px]">
          <svg width="11" height="11" viewBox="0 0 11 11">
            <path d="M0 0h11v11H0z" fill="#2f8f4a" />
            <path d="M2.5 2l6 7M8.5 2l-6 7" stroke="#fff" strokeWidth="1.6" />
          </svg>
        </div>
        <span className="text-[14px] leading-none font-bold text-white tracking-[1px] font-['Liberation_Sans',sans-serif]">Microsoft Excel - GanttChart</span>
        <div className="ml-auto flex gap-[2px]">
          <div className="w-[20px] h-[20px] rounded-[3px] border border-white bg-gradient-to-br from-[#7ea6f2] to-[#2457d0] flex items-end pl-[4px] pb-[3px]">
            <div className="w-[7px] h-[3px] bg-white" />
          </div>
          <div className="w-[20px] h-[20px] rounded-[3px] border border-white bg-gradient-to-br from-[#7ea6f2] to-[#2457d0] flex items-center justify-center">
            <div className="w-[11px] h-[10px] border border-t-[2px] border-white" />
          </div>
          <CloseBtn className="w-[20px] h-[20px]" />
        </div>
      </div>
      <div className="mx-[4px] h-[734px] bg-[#c3d9f7] flex flex-col">
        <MenuBar />
        <div className="pl-[2px] flex flex-col gap-[1px]">
          <StandardBar />
          <FormatBar />
        </div>
        <FormulaBar />
        <Sheet />
        <HScroll />
        <DrawBars />
        <StatusBar />
      </div>
      <SelectionMarks />
      <Chart />
      <GreenArrow />
      <ContextMenu />
      <div className="absolute left-[563px] top-[371px] w-[178px] h-[39px] rounded-[20px] border-[3px] border-[#ea12d8]" />
      <Cursor className="left-[714px] top-[389px]" />
      <Dialog />
      <div className="absolute left-[15px] top-[402px] w-[48px] h-[33px] rounded-[50%] border-[3px] border-[#ea12d8]" />
      <div className="absolute left-[11px] top-[477px] w-[98px] h-[28px] rounded-[50%] border-[3px] border-[#ea12d8]" />
      <div className="absolute left-[188px] top-[481px] w-[109px] h-[23px] rounded-[50%] border-[3px] border-[#ea12d8]" />
      <Cursor className="left-[358px] top-[746px]" />
    </div>
  )
}
